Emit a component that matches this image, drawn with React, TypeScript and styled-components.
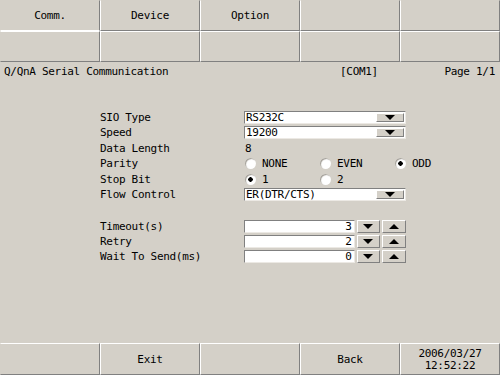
import styled, { createGlobalStyle } from "styled-components";

const GlobalStyle = createGlobalStyle`
  html, body {
    margin: 0;
    padding: 0;
    background: #d4d0c8;
  }
  body {
    font-family: "DejaVu Sans Mono", "Liberation Mono", monospace;
    font-size: 11px;
    letter-spacing: -0.3px;
    color: #000;
  }
`;

const tabs = ["Comm.", "Device", "Option", "", ""];
const footer = ["", "Exit", "", "Back"];

const selectRows = [
  { label: "SIO Type", value: "RS232C" },
  { label: "Speed", value: "19200" },
];

const spinRows = [
  { label: "Timeout(s)", value: "3" },
  { label: "Retry", value: "2" },
  { label: "Wait To Send(ms)", value: "0" },
];

const App = () => {
  return (
    <>
      <GlobalStyle />
      <Screen>
        <TabGrid>
          {tabs.map((t, i) => (
            <Cell key={"t" + i} $top $active={i === 0} $first={i === 0}>
              {t}
            </Cell>
          ))}
          {tabs.map((_, i) => (
            <Cell key={"b" + i} $first={i === 0} />
          ))}
        </TabGrid>

        <TitleRow>
          <span>Q/QnA Serial Communication</span>
          <span>[COM1]</span>
          <span>Page 1/1</span>
        </TitleRow>

        <Form>
          <FormGrid>
            {selectRows.map((r) => (
              <Row key={r.label}>
                <Label>{r.label}</Label>
                <Select>
                  <SelectValue>{r.value}</SelectValue>
                  <DropButton>
                    <Arrow $dir="down" />
                  </DropButton>
                </Select>
              </Row>
            ))}
            <Row>
              <Label>Data Length</Label>
              <PlainValue>8</PlainValue>
            </Row>
            <Row>
              <Label>Parity</Label>
              <RadioGroup>
                <RadioItem>
                  <Radio />
                  NONE
                </RadioItem>
                <RadioItem>
                  <Radio />
                  EVEN
                </RadioItem>
                <RadioItem>
                  <Radio $checked />
                  ODD
                </RadioItem>
              </RadioGroup>
            </Row>
            <Row>
              <Label>Stop Bit</Label>
              <RadioGroup>
                <RadioItem>
                  <Radio $checked />1
                </RadioItem>
                <RadioItem>
                  <Radio />2
                </RadioItem>
              </RadioGroup>
            </Row>
            <Row>
              <Label>Flow Control</Label>
              <Select>
                <SelectValue>ER(DTR/CTS)</SelectValue>
                <DropButton>
                  <Arrow $dir="down" />
                </DropButton>
              </Select>
            </Row>
          </FormGrid>

          <SpinGrid>
            {spinRows.map((r) => (
              <Row key={r.label}>
                <Label>{r.label}</Label>
                <Spin>
                  <SpinField>{r.value}</SpinField>
                  <SpinButton>
                    <Arrow $dir="down" />
                  </SpinButton>
                  <SpinButton>
                    <Arrow $dir="up" />
                  </SpinButton>
                </Spin>
              </Row>
            ))}
          </SpinGrid>
        </Form>

        <Footer>
          {footer.map((f, i) => (
            <FootCell key={i} $first={i === 0}>
              {f}
            </FootCell>
          ))}
          <FootCell>
            <DateText>
              2006/03/27
              <br />
              12:52:22
            </DateText>
          </FootCell>
        </Footer>
      </Screen>
    </>
  );
};

export default App;

const Screen = styled.div`
  width: 500px;
  height: 375px;
  display: flex;
  flex-direction: column;
  background: #d4d0c8;
  overflow: hidden;
`;

const TabGrid = styled.div`
  display: grid;
  grid-template-columns: repeat(5, 100px);
  grid-template-rows: 31px 31px;
`;

const Cell = styled.div<{ $top?: boolean; $active?: boolean; $first?: boolean }>`
  box-sizing: border-box;
  display: flex;
  align-items: center;
  justify-content: center;
  padding-bottom: 1px;
  border-left: 1px solid ${(p) => (p.$first ? "#d4d0c8" : "#fff")};
  border-right: 1px solid #808080;
  border-top: 1px solid ${(p) => (p.$top ? "#d4d0c8" : "#fff")};
  border-bottom: 1px solid ${(p) => (p.$active ? "#fff" : "#808080")};
`;

const TitleRow = styled.div`
  display: grid;
  grid-template-columns: 336px 1fr auto;
  height: 18px;
  align-items: center;
  padding: 0 5px 0 4px;
`;

const Form = styled.div`
  padding: 31px 0 0 100px;
`;

const FormGrid = styled.div`
  display: grid;
  grid-auto-rows: 13px;
  row-gap: 2.4px;
`;

const SpinGrid = styled.div`
  display: grid;
  grid-auto-rows: 13px;
  row-gap: 2px;
  margin-top: 19px;
`;

const Row = styled.div`
  display: grid;
  grid-template-columns: 144px 162px;
  align-items: center;
`;

const Label = styled.div`
  line-height: 13px;
  white-space: nowrap;
`;

const PlainValue = styled.div`
  padding-left: 1px;
  line-height: 13px;
`;

const Select = styled.div`
  box-sizing: border-box;
  height: 13px;
  display: flex;
  background: #fff;
  border-top: 1px solid #808080;
  border-left: 1px solid #808080;
  border-right: 1px solid #ece9e4;
  border-bottom: 1px solid #ece9e4;
`;

const SelectValue = styled.div`
  flex: 1;
  padding-left: 1px;
  line-height: 11px;
  white-space: nowrap;
`;

const raised = `
  box-sizing: border-box;
  background: #d4d0c8;
  border-top: 1px solid #fff;
  border-left: 1px solid #fff;
  border-right: 1px solid #808080;
  border-bottom: 1px solid #808080;
  display: flex;
  align-items: center;
  justify-content: center;
`;

const DropButton = styled.div`
  ${raised}
  width: 28px;
  margin: 1px 1px 1px 0;
`;

const Arrow = styled.span<{ $dir: "up" | "down" }>`
  width: 0;
  height: 0;
  border-left: 5px solid transparent;
  border-right: 5px solid transparent;
  ${(p) =>
    p.$dir === "down"
      ? "border-top: 5px solid #000;"
      : "border-bottom: 5px solid #000;"}
`;

const RadioGroup = styled.div`
  display: grid;
  grid-template-columns: 75px 75px 75px;
  align-items: center;
`;

const RadioItem = styled.div`
  display: flex;
  align-items: center;
  gap: 6px;
  line-height: 13px;
  white-space: nowrap;
`;

const Radio = styled.span<{ $checked?: boolean }>`
  box-sizing: border-box;
  width: 11px;
  height: 11px;
  margin-left: 1px;
  border-radius: 50%;
  background: ${(p) =>
    p.$checked
      ? "radial-gradient(circle, #000 0 2px, #fff 2.5px)"
      : "#fff"};
  box-shadow: inset 1px 1px 1px #a09c94;
`;

const Spin = styled.div`
  display: flex;
  gap: 2px;
  height: 13px;
`;

const SpinField = styled.div`
  box-sizing: border-box;
  width: 112px;
  background: #fff;
  border-top: 1px solid #808080;
  border-left: 1px solid #808080;
  border-right: 1px solid #ece9e4;
  border-bottom: 1px solid #ece9e4;
  text-align: right;
  padding-right: 2px;
  line-height: 11px;
`;

const SpinButton = styled.div`
  ${raised}
  width: 24px;
`;

const Footer = styled.div`
  margin-top: auto;
  display: grid;
  grid-template-columns: repeat(5, 100px);
  height: 32px;
`;

const FootCell = styled.div<{ $first?: boolean }>`
  ${raised}
  border-left-color: ${(p) => (p.$first ? "#d4d0c8" : "#fff")};
  padding-top: 1px;
`;

const DateText = styled.div`
  text-align: center;
  line-height: 12px;
`;
